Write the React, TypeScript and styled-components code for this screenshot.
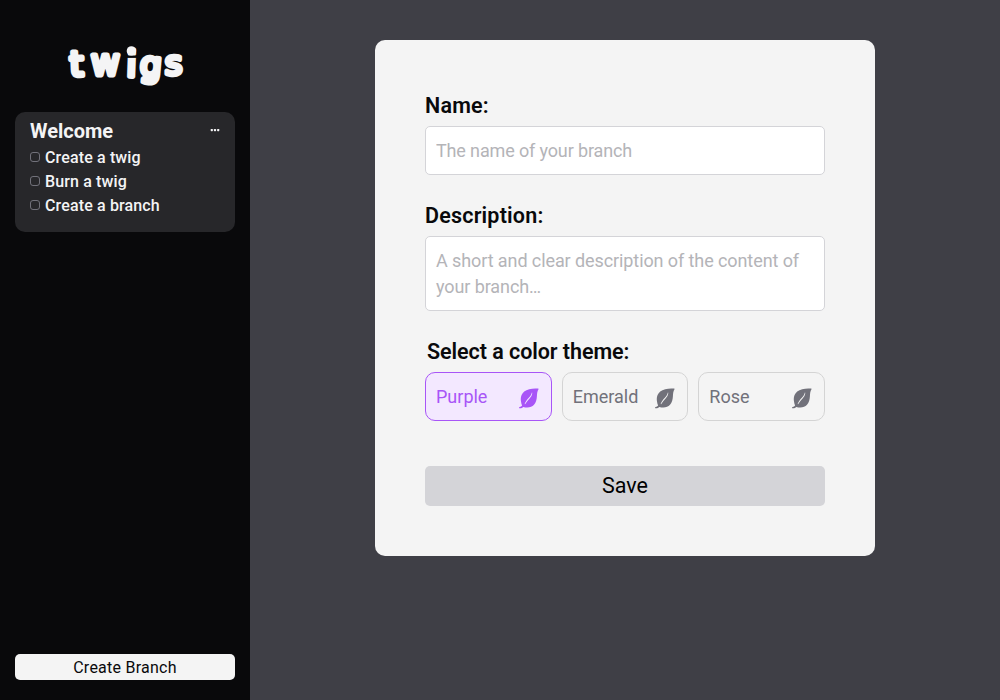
import React, { useState } from "react";
import styled, { createGlobalStyle } from "styled-components";

const GlobalStyle = createGlobalStyle`
  *, *::before, *::after { box-sizing: border-box; }
  body { margin: 0; font-family: Roboto, "Liberation Sans", sans-serif; }
  button, input, textarea { font-family: inherit; margin: 0; }
`;

const Page = styled.div`
  display: flex;
  height: 100vh;
  overflow: hidden;
  background: #3f3f46;
`;

const Sidebar = styled.aside`
  display: flex;
  flex-direction: column;
  align-items: stretch;
  width: 250px;
  padding: 42px 15px 20px;
  background: #09090b;
`;

const Logo = styled.svg`
  display: block;
  align-self: center;
  margin-bottom: 20px;
  overflow: visible;
`;

const LogoLetter = styled.text<{ $stroke: number }>`
  font-family: "DejaVu Sans", sans-serif;
  fill: #f4f4f5;
  stroke: #f4f4f5;
  stroke-width: ${(p) => p.$stroke}px;
  stroke-linejoin: round;
`;

const BranchCard = styled.section`
  padding: 5px 15px 15px;
  border-radius: 10px;
  background: #27272a;
  color: #f4f4f5;
`;

const CardHeader = styled.div`
  display: flex;
  align-items: center;
  justify-content: space-between;
  height: 28px;
`;

const CardTitle = styled.h2`
  margin: 0;
  font-size: 20px;
  font-weight: 700;
  line-height: 28px;
`;

const MenuButton = styled.button`
  display: flex;
  padding: 0;
  border: 0;
  background: none;
  color: inherit;
`;

const TwigList = styled.ul`
  margin: 0;
  padding: 0;
  list-style: none;
`;

const Twig = styled.li`
  display: flex;
  align-items: center;
  gap: 5px;
  height: 24px;
  font-size: 16px;
  font-weight: 500;
  letter-spacing: 0.14px;
  white-space: nowrap;
`;

const CheckBox = styled.span`
  width: 10px;
  height: 10px;
  border: 1px solid #71717a;
  border-radius: 3px;
`;

const CreateButton = styled.button`
  height: 26px;
  margin-top: auto;
  padding: 1px 0 0;
  border: 0;
  border-radius: 5px;
  background: #f4f4f4;
  color: #09090b;
  font-size: 16px;
  line-height: 25px;
  letter-spacing: 0.25px;
`;

const Main = styled.main`
  flex: 1;
  display: flex;
  justify-content: center;
  align-items: flex-start;
  padding-top: 40px;
`;

const Form = styled.form`
  display: flex;
  flex-direction: column;
  width: 500px;
  padding: 50px;
  border-radius: 10px;
  background: #f4f4f4;
`;

const Label = styled.label<{ $inset?: boolean }>`
  height: 30px;
  margin-bottom: 6px;
  padding-left: ${(p) => (p.$inset ? 2 : 0)}px;
  color: #09090b;
  font-size: 21.5px;
  font-weight: 600;
  line-height: 32px;
  letter-spacing: ${(p) => (p.$inset ? -0.06 : 0.2)}px;
`;

const NameInput = styled.input`
  height: 49px;
  margin-bottom: 25px;
  padding: 0 10px;
  border: 1px solid #d4d4d8;
  border-radius: 5px;
  outline: 0;
  background: #fff;
  font-size: 18px;
  letter-spacing: -0.14px;
  &::placeholder { color: #b4b4b8; }
`;

const DescriptionInput = styled.textarea`
  height: 75px;
  margin-bottom: 25px;
  padding: 11px 10px;
  border: 1px solid #d4d4d8;
  border-radius: 5px;
  outline: 0;
  background: #fff;
  font-size: 18px;
  line-height: 26px;
  letter-spacing: -0.09px;
  resize: none;
  overflow: hidden;
  &::placeholder { color: #b4b4b8; }
`;

const ThemeGrid = styled.div`
  display: grid;
  grid-template-columns: repeat(3, 1fr);
  gap: 10px;
  margin-bottom: 45px;
`;

const ThemeOption = styled.button<{ $active: boolean }>`
  display: flex;
  align-items: center;
  justify-content: space-between;
  height: 49px;
  padding: 0 12px 0 10px;
  border: 1px solid ${(p) => (p.$active ? "#a855f7" : "#d4d4d4")};
  border-radius: 10px;
  background: ${(p) => (p.$active ? "#f3e8ff" : "transparent")};
  color: ${(p) => (p.$active ? "#a855f7" : "#71717a")};
  font-size: 18px;
`;

const Leaf = styled.svg`
  margin: 3px 0 0;
`;

const SaveButton = styled.button`
  height: 40px;
  padding: 0;
  border: 0;
  border-radius: 5px;
  background: #d4d4d8;
  color: #000;
  font-size: 21.5px;
  line-height: 40px;
`;

const LeafIcon = () => (
  <Leaf width="20" height="21" viewBox="0 0 20 21" fill="currentColor">
    <path
      fillRule="evenodd"
      d="M19.2.5C14.2.1 8.600.6 5.200 3.600 2.200 6.200 1.300 9.700 2 13.400c.2 1.500.6 2.900 1.100 4-.6.9-1.400 1.400-2.500 1.600-.8.2-.7 1.200.1 1.300 1.500.1 2.700-.4 3.600-1.400 3.700 1.200 8.200.9 10.700-2.100 2-2.400 2.700-5.300 2.900-8.400.1-2.900.4-5.200 1.600-7.200.1-.3 0-.6-.3-.7ZM13.300 4.700c-.2 2.500-1.100 4.100-2.900 6-1.600 1.700-2.800 3.300-4.300 5.600l-.5-.3c1.100-2.500 2.300-4.300 4-6 1.700-1.800 2.700-3 3.300-5.400Z"
    />
  </Leaf>
);

const letters = [
  { char: "t", x: 4.9, y: 33.6, size: 34, stroke: 5, tilt: -2 },
  { char: "w", x: 26, y: 33, size: 35, stroke: 4.8, tilt: 0 },
  { char: "i", x: 61.6, y: 34.5, size: 35, stroke: 5, tilt: 2 },
  { char: "g", x: 75.2, y: 34.2, size: 34, stroke: 4.8, tilt: 5 },
  { char: "s", x: 99.8, y: 33.2, size: 34, stroke: 4.4, tilt: 0 },
];
const twigs = ["Create a twig", "Burn a twig", "Create a branch"];
const themes = ["Purple", "Emerald", "Rose"];

export default function App() {
  const [theme, setTheme] = useState("Purple");
  return (
    <Page>
      <GlobalStyle />
      <Sidebar>
        <Logo width="120" height="50" viewBox="0 0 120 50">
          {letters.map((l) => (
            <LogoLetter
              key={l.char}
              x={l.x}
              y={l.y}
              fontSize={l.size}
              $stroke={l.stroke}
              transform={`rotate(${l.tilt} ${l.x + 10} ${l.y - 10})`}
            >
              {l.char}
            </LogoLetter>
          ))}
          <path d="M60 14.700h13" stroke="#09090b" strokeWidth="2.400" />
          <circle cx="66.400" cy="8.900" r="4.700" fill="#f4f4f5" />
        </Logo>
        <BranchCard>
          <CardHeader>
            <CardTitle>Welcome</CardTitle>
            <MenuButton aria-label="Branch menu">
              <svg width="10" height="10" viewBox="0 0 10 10" fill="currentColor">
                <rect x="0.7" y="3" width="2.2" height="2.2" rx="0.6" />
                <rect x="3.9" y="3" width="2.2" height="2.2" rx="0.6" />
                <rect x="7.1" y="3" width="2.2" height="2.2" rx="0.6" />
              </svg>
            </MenuButton>
          </CardHeader>
          <TwigList>
            {twigs.map((t) => (
              <Twig key={t}><CheckBox />{t}</Twig>
            ))}
          </TwigList>
        </BranchCard>
        <CreateButton>Create Branch</CreateButton>
      </Sidebar>
      <Main>
        <Form onSubmit={(e) => e.preventDefault()}>
          <Label htmlFor="name">Name:</Label>
          <NameInput id="name" placeholder="The name of your branch" />
          <Label htmlFor="description">Description:</Label>
          <DescriptionInput
            id="description"
            placeholder="A short and clear description of the content of your branch…"
          />
          <Label as="div" $inset>Select a color theme:</Label>
          <ThemeGrid>
            {themes.map((t) => (
              <ThemeOption key={t} type="button" $active={t === theme} onClick={() => setTheme(t)}>
                {t}
                <LeafIcon />
              </ThemeOption>
            ))}
          </ThemeGrid>
          <SaveButton>Save</SaveButton>
        </Form>
      </Main>
    </Page>
  );
}
